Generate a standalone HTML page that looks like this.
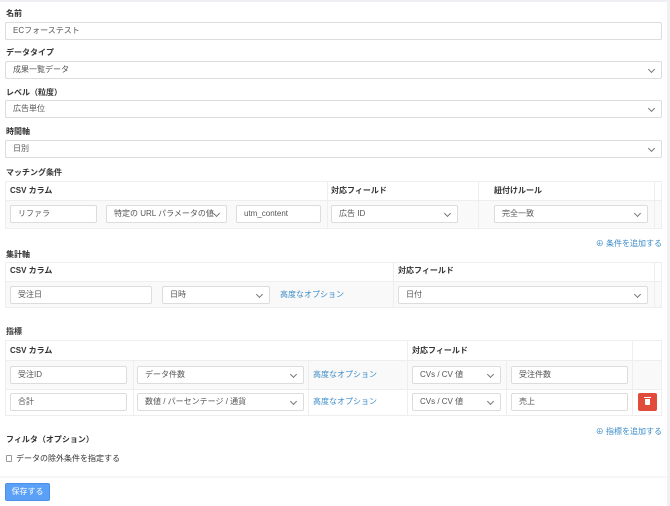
<!DOCTYPE html>
<html><head><meta charset="utf-8"><style>
*{box-sizing:border-box;margin:0;padding:0}
body{width:670px;height:506px;background:#fff;font-family:"Liberation Sans","Noto Sans CJK JP",sans-serif;font-size:8px;color:#333;position:relative;overflow:hidden}
.a{position:absolute}
.lbl{position:absolute;font-weight:bold;font-size:8px;color:#333;left:6px}
.in{position:absolute;border:1px solid #dcdcdc;background:#fff;border-radius:2px;height:18px;line-height:16px;padding-left:7px;font-size:8px;color:#555;white-space:nowrap;overflow:hidden}
.sel::after{content:"";position:absolute;right:7px;top:5px;width:4px;height:4px;border-right:1px solid #777;border-bottom:1px solid #777;transform:rotate(45deg)}
.tb{position:absolute;left:5px;width:657px;border:1px solid #eee}
.hd{position:absolute;font-weight:bold;font-size:8px;color:#333}
.body{position:absolute;background:#f9f9f9}
.vl{position:absolute;width:1px;background:#eee}
.lk{position:absolute;color:#3a8bc8;font-size:8px;white-space:nowrap}
</style></head><body>
<div class="a" style="left:0;top:0;width:670px;height:2px;background:#eef0f3"></div>
<div class="a" style="left:667px;top:0;width:3px;height:506px;background:#f0f1f4"></div>

<div class="lbl" style="top:8px">名前</div>
<div class="in" style="left:5px;top:22px;width:657px">ECフォーステスト</div>
<div class="lbl" style="top:47px">データタイプ</div>
<div class="in sel" style="left:5px;top:61px;width:657px">成果一覧データ</div>
<div class="lbl" style="top:87px">レベル（粒度）</div>
<div class="in sel" style="left:5px;top:100px;width:657px">広告単位</div>
<div class="lbl" style="top:126px">時間軸</div>
<div class="in sel" style="left:5px;top:140px;width:657px">日別</div>

<div class="lbl" style="top:167px">マッチング条件</div>
<div class="tb" style="top:181px;height:48px"></div>
<div class="body" style="left:6px;top:200px;width:655px;height:28px"></div>
<div class="a" style="left:6px;top:200px;width:655px;height:1px;background:#eee"></div>
<div class="vl" style="left:327px;top:182px;height:46px"></div>
<div class="vl" style="left:478px;top:182px;height:46px"></div>
<div class="vl" style="left:654px;top:182px;height:46px"></div>
<div class="hd" style="left:10px;top:185px">CSV カラム</div>
<div class="hd" style="left:331px;top:185px">対応フィールド</div>
<div class="hd" style="left:494px;top:185px">紐付けルール</div>
<div class="in" style="left:10px;top:205px;width:87px">リファラ</div>
<div class="in sel" style="left:106px;top:205px;width:121px">特定の URL パラメータの値</div>
<div class="in" style="left:236px;top:205px;width:85px">utm_content</div>
<div class="in sel" style="left:331px;top:205px;width:127px">広告 ID</div>
<div class="in sel" style="left:494px;top:205px;width:154px">完全一致</div>
<div class="lk" style="right:8px;top:238px">⊕ 条件を追加する</div>

<div class="lbl" style="top:249px">集計軸</div>
<div class="tb" style="top:262px;height:46px"></div>
<div class="body" style="left:6px;top:281px;width:655px;height:26px"></div>
<div class="a" style="left:6px;top:281px;width:655px;height:1px;background:#eee"></div>
<div class="vl" style="left:393px;top:263px;height:44px"></div>
<div class="vl" style="left:654px;top:263px;height:44px"></div>
<div class="hd" style="left:10px;top:265px">CSV カラム</div>
<div class="hd" style="left:398px;top:265px">対応フィールド</div>
<div class="in" style="left:10px;top:286px;width:142px">受注日</div>
<div class="in sel" style="left:162px;top:286px;width:108px">日時</div>
<div class="lk" style="left:280px;top:289px">高度なオプション</div>
<div class="in sel" style="left:398px;top:286px;width:250px">日付</div>

<div class="lbl" style="top:326px">指標</div>
<div class="tb" style="top:340px;height:76px"></div>
<div class="body" style="left:6px;top:360px;width:655px;height:29px"></div>
<div class="a" style="left:6px;top:360px;width:655px;height:1px;background:#eee"></div>
<div class="a" style="left:6px;top:389px;width:655px;height:1px;background:#eee"></div>
<div class="vl" style="left:133px;top:361px;height:54px"></div>
<div class="vl" style="left:308px;top:361px;height:54px"></div>
<div class="vl" style="left:407px;top:341px;height:74px"></div>
<div class="vl" style="left:506px;top:361px;height:54px"></div>
<div class="vl" style="left:632px;top:341px;height:74px"></div>
<div class="hd" style="left:10px;top:345px">CSV カラム</div>
<div class="hd" style="left:412px;top:345px">対応フィールド</div>
<div class="in" style="left:10px;top:366px;width:117px">受注ID</div>
<div class="in sel" style="left:137px;top:366px;width:167px">データ件数</div>
<div class="lk" style="left:313px;top:369px">高度なオプション</div>
<div class="in sel" style="left:412px;top:366px;width:89px">CVs / CV 値</div>
<div class="in" style="left:511px;top:366px;width:117px">受注件数</div>
<div class="in" style="left:10px;top:393px;width:117px">合計</div>
<div class="in sel" style="left:137px;top:393px;width:167px">数値 / パーセンテージ / 通貨</div>
<div class="lk" style="left:313px;top:396px">高度なオプション</div>
<div class="in sel" style="left:412px;top:393px;width:89px">CVs / CV 値</div>
<div class="in" style="left:511px;top:393px;width:117px">売上</div>
<div class="a" style="left:638px;top:393px;width:19px;height:18px;background:#e04b3c;border-radius:2px"><div class="a" style="left:7px;top:6px;width:5px;height:6px;background:#fff;border-radius:0 0 1px 1px"></div><div class="a" style="left:6px;top:4px;width:7px;height:1px;background:#fff"></div></div>
<div class="lk" style="right:8px;top:426px">⊕ 指標を追加する</div>

<div class="lbl" style="top:434px">フィルタ（オプション）</div>
<div class="a" style="left:6px;top:455px;width:6px;height:7px;border:1px solid #999;border-radius:1px;background:#fff"></div>
<div class="a" style="left:16px;top:453px;font-size:8px;color:#333">データの除外条件を指定する</div>
<div class="a" style="left:0;top:476px;width:667px;height:2px;background:#f6f6f6"></div>
<div class="a" style="left:5px;top:483px;width:45px;height:18px;background:#5aa0f7;border:1px solid #4b90e6;border-radius:2px;color:#fff;font-size:8px;line-height:16px;text-align:center">保存する</div>
</body></html>
